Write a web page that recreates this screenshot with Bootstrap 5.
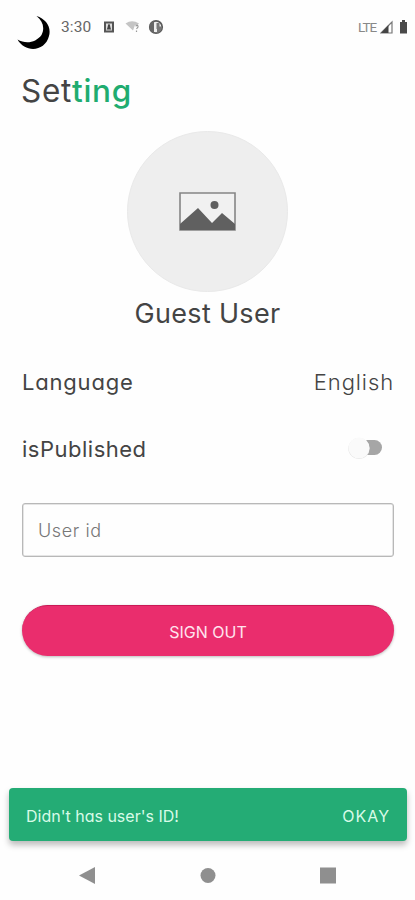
<!DOCTYPE html>
<html lang="en">
<head>
<meta charset="utf-8">
<meta name="viewport" content="width=device-width, initial-scale=1">
<title>Setting</title>
<link href="https://cdn.jsdelivr.net/npm/bootstrap@5.3.0/dist/css/bootstrap.min.css" rel="stylesheet">
<style>
body{font-family:Inter,"Open Sans",sans-serif;font-feature-settings:"cv11" 1,"ss03" 1;color:#444;background:#fefefe;min-height:900px;overflow:hidden}
.screen{width:415px;height:900px}
.status{height:60px;padding:15px 7px 0 17px;font-family:Roboto,sans-serif}
.clock{font-size:15.5px;line-height:24px;color:#666;letter-spacing:.1px;margin-left:11px;width:43px}
.lte{font-size:13.5px;line-height:24px;color:#888;letter-spacing:-1.1px;margin-right:4px}
.heading{font-size:31.5px;line-height:40px;height:71px;padding:11px 21px 0;font-weight:400;letter-spacing:.7px}
.accent{color:#1fac70;font-weight:500}
.avatar{width:161px;height:161px;background:#eee;border:1px solid #e9e9e9}
.person{font-size:27px;line-height:40px;font-weight:400;letter-spacing:.3px;margin-top:2px}
.options{margin-top:14px;padding:0 22px}
.option{height:67px;font-size:22px;line-height:30px;letter-spacing:.5px}
.o-lang{letter-spacing:.8px}
.o-eng{letter-spacing:.9px;margin-right:-1px}
.light-text{font-weight:300}
.switch-box{width:35px;height:24px;margin-right:10px}
.form-area{padding:0 21px 0 22px}
.field.form-control{height:54px;margin-top:21px;border:1.5px solid #b8b8b8;box-shadow:inset 0 0 0 .5px #ccc;border-radius:3px;padding:0 15px;font-size:18px;font-weight:300;background:transparent;letter-spacing:.6px}
.field::placeholder{color:#777}
.signout.btn{height:51px;margin-top:48px;background:#ea2d6d;border:0;border-top:1px solid #c91955;color:#ffe4ee;font-size:16px;padding-top:7px;letter-spacing:0;box-shadow:0 1px 3px #0004}
.snack{height:53px;margin:132px 8px 0 9px;padding:3px 17px 0;background:#24ac75;border-radius:4px;color:#d8fbe8;font-size:16px;box-shadow:0 4px 6px #0004}
.okay.btn{font-size:16px;color:#d8fbe8;letter-spacing:1px;margin-right:-1px}
.sysnav{height:59px;padding:26px 79px 0 79px}
</style>
<script src="https://cdn.jsdelivr.net/npm/bootstrap@5.3.0/dist/js/bootstrap.bundle.min.js"></script>
</head>
<body>
<div class="screen d-flex flex-column">
  <header class="status d-flex align-items-start">
    <svg width="33" height="35" viewBox="0 0 33 35"><path d="M19.500 1C29 4 34.500 12 32 21 28 37 8 38 .5 24.500 9 29.500 19 27.500 24.500 20 28 13 26 6 19.500 1Z" fill="#000"/></svg>
    <span class="clock">3:30</span>
    <svg width="60" height="24" viewBox="0 0 60 24">
      <path d="M0 6.500H10V17.500H0Z" fill="#555"/><path d="M2 8.500H8V15.500H2Z" fill="#ddd"/><path d="M2.500 14.500C4 13.500 3.500 9 5 9S6 13.500 7.500 14.500Z" fill="#444"/>
      <path d="M21.500 8.500Q28 4 35 8.500L33.500 10H31L29 15.500Z" fill="#c5c5c5"/><path d="M31.500 11Q34.500 9.500 34 12L32.500 14M32.500 15.500V17" fill="none" stroke="#999" stroke-width="1.200"/>
      <circle cx="52" cy="12" r="6.200" fill="#eee" stroke="#5a5a5a" stroke-width="1.800"/><path d="M50 6A6.200 6.200 0 0 0 50 18Z" fill="#666"/><path d="M52.500 8H55.500V11.500H58A6.200 6.200 0 0 1 53 18V14H52.500Z" fill="#777"/>
    </svg>
    <span class="lte ms-auto">LTE</span>
    <svg width="28" height="24" viewBox="0 0 28 24"><path d="M1 18 12 7V18Z" fill="#fff" stroke="#777" stroke-width="1.200"/><path d="M1 18 8.500 10V18Z" fill="#444"/><path d="M20 7H22V5H25V7H27V18.500H20Z" fill="#4a4a4a"/></svg>
  </header>
  <main class="d-flex flex-column">
    <h1 class="heading mb-0"><span class="set">Set</span><span class="accent">ting</span></h1>
    <div class="avatar rounded-circle d-flex align-items-center justify-content-center align-self-center">
      <svg width="57" height="39" viewBox="0 0 57 39"><path d="M1 1H56V38H1Z" fill="#f1f1f1" stroke="#858585" stroke-width="1.600"/><path d="M1 32 19 16 33 31 43 21 56 32V38H1Z" fill="#606060"/><circle cx="35.500" cy="13" r="4" fill="#606060"/></svg>
    </div>
    <h2 class="person text-center mb-0">Guest User</h2>
    <div class="options">
      <div class="option d-flex justify-content-between align-items-center"><span class="o-lang">Language</span><span class="o-eng light-text">English</span></div>
      <div class="option d-flex justify-content-between align-items-center"><span class="o-pub">isPublished</span>
        <svg class="switch-box" width="35" height="24" viewBox="0 0 35 24" role="switch" aria-checked="false"><rect x="5" y="3" width="29" height="15" rx="7.500" fill="#a6a6a6"/><circle cx="11" cy="11.500" r="10.600" fill="#e0e0e0"/><circle cx="11" cy="11" r="10.500" fill="#fafafa"/></svg></div>
    </div>
    <div class="form-area d-flex flex-column">
      <input class="field form-control" placeholder="User id" aria-label="User id">
      <button class="signout btn rounded-pill w-100">SIGN OUT</button>
    </div>
  </main>
  <div class="snack d-flex justify-content-between align-items-center"><span class="msg">Didn't has user's ID!</span><button class="okay btn p-0">OKAY</button></div>
  <nav class="sysnav d-flex justify-content-between align-items-start">
    <svg width="16" height="17"><path d="M0 8.500 16 0V17Z" fill="#8f8f8f"/></svg>
    <svg width="16" height="17"><circle cx="8" cy="8.500" r="7.500" fill="#8f8f8f"/></svg>
    <svg width="16" height="17"><path d="M0 .5H16V16.500H0Z" fill="#8f8f8f"/></svg>
  </nav>
</div>
</body>
</html>
